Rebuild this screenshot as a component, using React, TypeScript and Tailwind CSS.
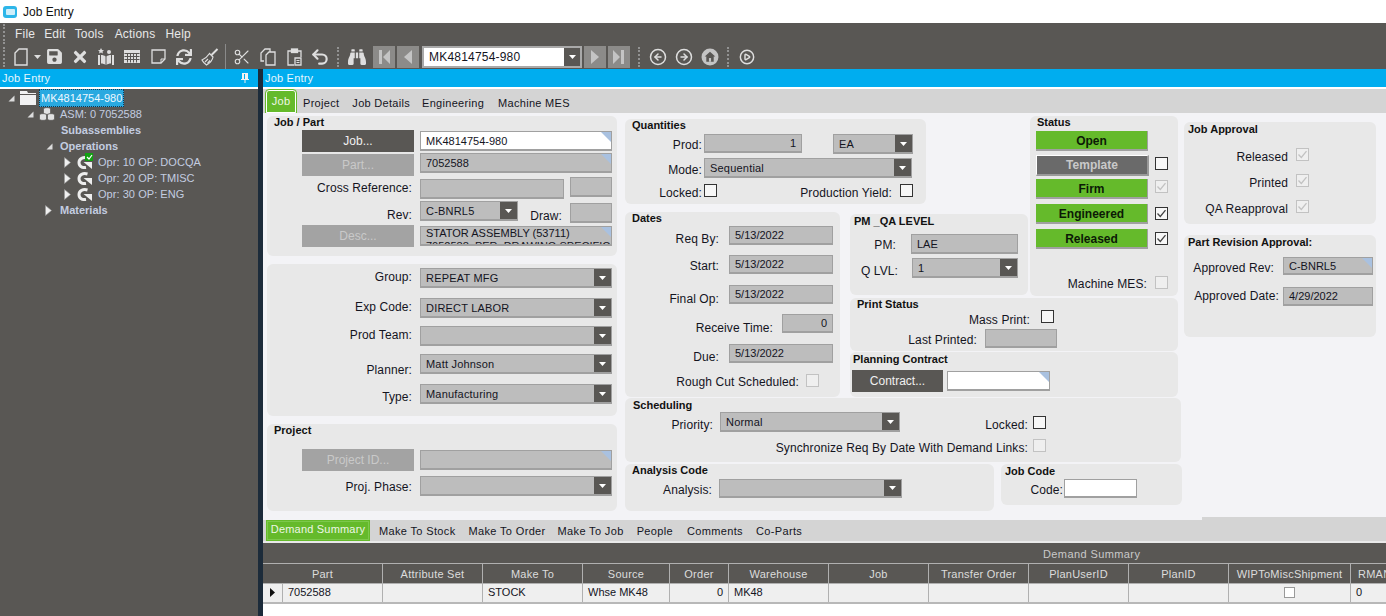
import React from "react";
import { FaSave, FaTimes, FaBinoculars, FaSync } from "react-icons/fa";
import { Scissors, Undo2, CircleArrowLeft, CircleArrowRight, CirclePlay } from "lucide-react";

const cx = (...c: (string | undefined)[]) => c.filter(Boolean).join(" ");

const Label = ({ className, children }: { className?: string; children: React.ReactNode }) => (
  <div className={cx("h-[17px] shrink-0 whitespace-nowrap pt-px text-right text-[12px] leading-[16px] tracking-[0.1px] text-[#14141e]", className)}>
    {children}
  </div>
);

const Corner = () => (
  <span className="absolute right-0 top-0 h-[10px] w-[10px] bg-[#a9c1e0] [clip-path:polygon(0_0,100%_0,100%_100%)]" />
);

type FieldProps = { className?: string; text?: string; corner?: boolean; white?: boolean; right?: boolean };

const Field = ({ className, text, corner, white, right }: FieldProps) => (
  <div
    className={cx(
      "relative flex shrink-0 items-center overflow-hidden whitespace-nowrap border border-b-2 border-[#a0a0a0] px-[5px] pt-px text-[11px] text-[#14141e]",
      white ? "bg-white" : "bg-[#bdbdbd]",
      right ? "justify-end" : "",
      className
    )}
  >
    {text}
    {corner && <Corner />}
  </div>
);

const Select = ({ className, text }: { className?: string; text?: string }) => (
  <div className={cx("flex shrink-0 items-stretch border border-b-2 border-[#a0a0a0] bg-[#bdbdbd] text-[11px] tracking-[0.2px] text-[#14141e]", className)}>
    <div className="flex flex-1 items-center overflow-hidden whitespace-nowrap pl-[5px] pt-px">{text}</div>
    <div className="flex w-[17px] items-center justify-center bg-[#595754]">
      <svg width="7" height="4" viewBox="0 0 7 4"><path d="M0 0h7L3.5 4z" fill="#fff" /></svg>
    </div>
  </div>
);

const Btn = ({ className, children, off }: { className?: string; children: React.ReactNode; off?: boolean }) => (
  <div
    className={cx(
      "flex h-[22px] shrink-0 items-center justify-center text-[12px]",
      off ? "bg-[#a3a3a3] text-[#c9c9c9]" : "bg-[#595754] text-[#f0f0f0]",
      className
    )}
  >
    {children}
  </div>
);

const Check = ({ className, on, off }: { className?: string; on?: boolean; off?: boolean }) => (
  <div
    className={cx(
      "flex h-[13px] w-[13px] shrink-0 items-center justify-center border",
      off ? "border-[#c2c2c2] bg-[#efefef]" : "border-[#333] bg-[#f7f7f7]",
      className
    )}
  >
    {on && (
      <svg width="11" height="11" viewBox="0 0 11 11" fill="none">
        <path d="M1.5 5.5 4.3 8.5 9.5 2.2" stroke={off ? "#c2c2c2" : "#444"} strokeWidth="1.3" />
      </svg>
    )}
  </div>
);

const Panel = ({ className, title, titleClass, children }: { className?: string; title?: string; titleClass?: string; children: React.ReactNode }) => (
  <div className={cx("shrink-0 overflow-hidden rounded-md bg-[#e8e8e8]", className)}>
    {title && <div className={cx("h-[12px] whitespace-nowrap text-[11px] font-bold leading-[12px] text-[#111]", titleClass)}>{title}</div>}
    {children}
  </div>
);

const StatusBtn = ({ className, children }: { className?: string; children: React.ReactNode }) => (
  <div className={cx("flex h-[20px] w-[112px] shrink-0 items-center justify-center border-b-2 border-r border-[#a0a0a0] bg-[#65ba2b] pt-px text-[12px] font-bold text-[#0c1a06]", className)}>
    {children}
  </div>
);

const Grip = ({ className }: { className?: string }) => (
  <div className={cx("h-[20px] w-[2px] shrink-0 border-l-2 border-dotted border-[#929292]", className)} />
);

const Tool = ({ className, children }: { className?: string; children: React.ReactNode }) => (
  <div className={cx("flex h-[25px] w-[26px] shrink-0 items-center justify-center text-[#dedede]", className)}>{children}</div>
);

const NavBtn = ({ className, d }: { className?: string; d: string }) => (
  <div className={cx("flex h-[22px] w-[22px] shrink-0 items-center justify-center bg-[#8c8b89]", className)}>
    <svg width="14" height="16" viewBox="0 0 14 16"><path d={d} fill="#c4c4c4" /></svg>
  </div>
);

const Toolbar = () => (
  <div className="flex h-[25px] shrink-0 items-center bg-[#595754]">
    <Grip className="ml-[3px]" />
    <Tool className="ml-[3px]">
      <svg width="14" height="18" viewBox="0 0 14 18" fill="none"><path d="M5 1h8v16H1V5z" stroke="#dedede" strokeWidth="1.4" /></svg>
    </Tool>
    <svg className="shrink-0" width="7" height="4" viewBox="0 0 7 4"><path d="M0 0h7L3.5 4z" fill="#dedede" /></svg>
    <Tool><FaSave size={17} /></Tool>
    <Tool><FaTimes size={18} /></Tool>
    <Tool>
      <svg width="18" height="18" viewBox="0 0 18 18" fill="#dedede">
        <path d="M4 0l1 2 2 .2-1.5 1.4.4 2L4 4.6 2.100 5.600l.4-2L1 2.200 3 2z" />
        <rect x="1" y="7" width="2" height="10" />
        <path d="M4 7c2 0 3.500.5 4.500 1.500V17C7.500 16 6 15.500 4 15.500z" />
        <path d="M14 7c-2 0-3.500.5-4.500 1.500V17c1-1 2.500-1.500 4.500-1.500z" />
        <rect x="15" y="7" width="2" height="10" />
        <circle cx="12" cy="4" r="2" />
      </svg>
    </Tool>
    <Tool>
      <svg width="16" height="13" viewBox="0 0 16 13" fill="none" stroke="#dedede">
        <rect x=".5" y=".5" width="15" height="12" fill="#dedede" />
        <path d="M3.500 3.500v9M6.500 3.500v9M9.500 3.500v9M12.500 3.500v9M.5 3.500h15M.5 6.500h15M.5 9.500h15" stroke="#595754" />
      </svg>
    </Tool>
    <Tool>
      <svg width="15" height="15" viewBox="0 0 15 15" fill="none"><path d="M1 1h13v9l-4 4H1z" stroke="#dedede" strokeWidth="1.3" /><path d="M14 10h-4v4" stroke="#dedede" /></svg>
    </Tool>
    <Tool><FaSync size={16} /></Tool>
    <Tool>
      <svg width="18" height="18" viewBox="0 0 18 18" fill="none" stroke="#dedede" strokeWidth="1.2">
        <path d="M16.500 1 10.500 7" strokeWidth="2" />
        <path d="M8.500 5.500 12 9c-.5 3-3 6-6.500 8C4 16 2 14 1 12c2.500-1 5.500-3.500 7.500-6.500z" />
        <path d="M4 14l3-3M6.500 15.500l2.500-3" />
      </svg>
    </Tool>
    <div className="ml-[2px] h-[25px] w-px shrink-0 bg-[#8a8a8a]" />
    <Tool className="ml-[3px]"><Scissors size={18} strokeWidth={1.5} /></Tool>
    <Tool>
      <svg width="16" height="18" viewBox="0 0 16 18" fill="none" stroke="#dedede" strokeWidth="1.3">
        <path d="M4 13H1V5l4-4h5v3" /><path d="M6 7l3-3h6v13H6z" />
      </svg>
    </Tool>
    <Tool>
      <svg width="15" height="18" viewBox="0 0 15 18" fill="none" stroke="#dedede" strokeWidth="1.3">
        <path d="M5 3H1v14h6" /><path d="M10 3h4v6" /><rect x="4.500" y="1" width="6" height="3.500" fill="#dedede" />
        <path d="M8 10h6v7H8z" fill="#595754" /><path d="M9.500 12.500h3M9.500 14.500h3" strokeWidth="1" />
      </svg>
    </Tool>
    <Tool><Undo2 size={20} strokeWidth={2.6} /></Tool>
    <Grip className="ml-[4px]" />
    <Tool className="ml-[5px]"><FaBinoculars size={18} /></Tool>
    <NavBtn className="ml-[3px]" d="M2 1h3v14H2zM13 1v14L6 8z" />
    <NavBtn className="ml-[2px]" d="M11 1v14L3 8z" />
    <div className="ml-[3px] flex h-[22px] w-[160px] shrink-0 items-stretch border-2 border-[#a9a9a9] bg-white text-[12px] tracking-[0.2px] text-[#14141e]">
      <div className="flex flex-1 items-center pl-[5px]">MK4814754-980</div>
      <div className="flex w-[16px] items-center justify-center bg-[#595754]">
        <svg width="7" height="4" viewBox="0 0 7 4"><path d="M0 0h7L3.500 4z" fill="#fff" /></svg>
      </div>
    </div>
    <NavBtn className="ml-[2px]" d="M3 1v14l8-7z" />
    <NavBtn className="ml-[2px]" d="M1 1v14l7-7zM9 1h3v14H9z" />
    <Grip className="ml-[8px]" />
    <Tool className="ml-[5px]"><CircleArrowLeft size={18} strokeWidth={2} /></Tool>
    <Tool><CircleArrowRight size={18} strokeWidth={2} /></Tool>
    <Tool>
      <svg width="18" height="18" viewBox="0 0 17 17">
        <circle cx="8.500" cy="8.500" r="8" fill="#c4c4c4" />
        <path d="M8.500 3.500 13.500 8H12v5H5V8H3.500z" fill="#595754" />
        <rect x="7.500" y="9.500" width="2" height="3.500" fill="#c4c4c4" />
      </svg>
    </Tool>
    <Grip className="ml-[4px]" />
    <Tool className="ml-[5px]"><CirclePlay size={16} strokeWidth={2.2} /></Tool>
  </div>
);

const TriOpen = ({ className }: { className?: string }) => (
  <svg className={cx("shrink-0", className)} width="7" height="7" viewBox="0 0 7 7"><path d="M6.500 .5v6H.5z" fill="#dcdcdc" /></svg>
);

const TriClosed = ({ className }: { className?: string }) => (
  <svg className={cx("shrink-0", className)} width="7" height="11" viewBox="0 0 7 11"><path d="M.5 .5 6.500 5.500.5 10.500z" fill="#f0f0f0" stroke="#999" strokeWidth=".6" /></svg>
);

const OpIcon = ({ done }: { done?: boolean }) => (
  <div className="relative ml-[6px] h-[13px] w-[15px] shrink-0">
    <svg width="15" height="13" viewBox="0 0 15 13" fill="none">
      <path d="M10.500 2C6 .8 2 2.500 2 6.500S5.500 12 9 11.500" stroke="#ededed" strokeWidth="3" />
      <path d="M6.500 6h8.500v7z" fill="#ededed" />
    </svg>
    {done && (
      <div className="absolute -right-[1px] -top-[3px] flex h-[8px] w-[8px] items-center justify-center bg-[#12a012]">
        <svg width="7" height="6" viewBox="0 0 7 6" fill="none"><path d="M1 3l2 2 3-4" stroke="#fff" strokeWidth="1.200" /></svg>
      </div>
    )}
  </div>
);

const TreeRow = ({ className, children }: { className?: string; children: React.ReactNode }) => (
  <div className={cx("flex h-[16px] items-center whitespace-nowrap text-[11px] text-[#c3cde0]", className)}>{children}</div>
);

const Tree = () => (
  <div className="flex-1 bg-[#595754] pt-px">
    <TreeRow className="pl-[8px]">
      <TriOpen />
      <svg className="ml-[5px] shrink-0" width="16" height="14" viewBox="0 0 16 14" fill="#f2f2f2"><path d="M0 0h7l1 2h8v1H0zM0 4h16v10H0z" /></svg>
      <span className="ml-[3px] border border-dotted border-[#0e3a55] bg-[#29a9e0] px-[1px] text-[#eef8ff]">MK4814754-980</span>
    </TreeRow>
    <TreeRow className="pl-[27px]">
      <TriOpen />
      <svg className="ml-[5px] shrink-0" width="16" height="14" viewBox="0 0 16 14">
        <g fill="#e2e2e2" stroke="#595754" strokeWidth=".7">
          <path d="M4.500 2c0-1.800 7-1.800 7 0v4c0 1.800-7 1.800-7 0z" />
          <path d="M.5 8c0-1.800 7-1.800 7 0v4c0 1.800-7 1.800-7 0z" />
          <path d="M8.500 8c0-1.800 7-1.800 7 0v4c0 1.800-7 1.800-7 0z" />
        </g>
      </svg>
      <span className="ml-[5px]">ASM: 0 7052588</span>
    </TreeRow>
    <TreeRow className="pl-[61px] font-bold">Subassemblies</TreeRow>
    <TreeRow className="pl-[46px] font-bold">
      <TriOpen />
      <span className="ml-[7px]">Operations</span>
    </TreeRow>
    <TreeRow className="pl-[64px]">
      <TriClosed />
      <OpIcon done />
      <span className="ml-[6px] tracking-[0.05px]">Opr: 10 OP: DOCQA</span>
    </TreeRow>
    <TreeRow className="pl-[64px]">
      <TriClosed />
      <OpIcon />
      <span className="ml-[6px] tracking-[0.05px]">Opr: 20 OP: TMISC</span>
    </TreeRow>
    <TreeRow className="pl-[64px]">
      <TriClosed />
      <OpIcon />
      <span className="ml-[6px] tracking-[0.05px]">Opr: 30 OP: ENG</span>
    </TreeRow>
    <TreeRow className="pl-[45px] font-bold">
      <TriClosed />
      <span className="ml-[8px]">Materials</span>
    </TreeRow>
  </div>
);

const JobPanels = () => (
  <div className="flex w-[350px] shrink-0 flex-col">
    <Panel className="h-[140px]" title="Job / Part" titleClass="pl-[7px]">
      <div className="mt-[2px] flex h-[23px]">
        <Btn className="ml-[35px] w-[112px]">Job...</Btn>
        <Field className="ml-[6px] mt-[1px] h-[20px] w-[192px]" text="MK4814754-980" white corner />
      </div>
      <div className="flex h-[24px]">
        <Btn off className="ml-[35px] mt-[1px] w-[112px]">Part...</Btn>
        <Field className="ml-[6px] h-[20px] w-[192px]" text="7052588" corner />
      </div>
      <div className="flex h-[24px]">
        <Label className="mt-[2px] w-[145px]">Cross Reference:</Label>
        <Field className="ml-[8px] mt-[2px] h-[20px] w-[144px]" />
        <Field className="ml-[6px] h-[20px] w-[42px]" />
      </div>
      <div className="flex h-[24px]">
        <Label className="mt-[5px] w-[145px]">Rev:</Label>
        <Select className="ml-[8px] h-[20px] w-[98px]" text="C-BNRL5" />
        <Label className="ml-[12px] mt-[6px] w-[32px]">Draw:</Label>
        <Field className="ml-[8px] mt-[2px] h-[20px] w-[42px]" />
      </div>
      <div className="flex">
        <Btn off className="ml-[35px] w-[112px]">Desc...</Btn>
        <div className="relative ml-[6px] mt-[1px] h-[20px] w-[192px] overflow-hidden border border-b-2 border-[#a0a0a0] bg-[#bdbdbd] px-[5px] text-[11px] leading-[13px] text-[#14141e]">
          <div className="whitespace-nowrap">STATOR ASSEMBLY (53711)</div>
          <div className="whitespace-nowrap">7052588, PER, DRAWING SPECIFIC</div>
          <Corner />
        </div>
      </div>
    </Panel>

    <Panel className="mt-[8px] h-[152px] pt-[4px]">
      <div className="flex h-[30px]">
        <Label className="w-[145px]">Group:</Label>
        <Select className="ml-[8px] h-[20px] w-[192px]" text="REPEAT MFG" />
      </div>
      <div className="flex h-[28px]">
        <Label className="w-[145px]">Exp Code:</Label>
        <Select className="ml-[8px] h-[20px] w-[192px]" text="DIRECT LABOR" />
      </div>
      <div className="flex h-[28px]">
        <Label className="w-[145px]">Prod Team:</Label>
        <Select className="ml-[8px] h-[20px] w-[192px]" />
      </div>
      <div className="flex h-[30px]">
        <Label className="mt-[7px] w-[145px]">Planner:</Label>
        <Select className="ml-[8px] h-[20px] w-[192px]" text="Matt Johnson" />
      </div>
      <div className="flex">
        <Label className="mt-[4px] w-[145px]">Type:</Label>
        <Select className="ml-[8px] h-[20px] w-[192px]" text="Manufacturing" />
      </div>
    </Panel>

    <Panel className="mt-[8px] h-[87px]" title="Project" titleClass="pl-[7px]">
      <div className="mt-[13px] flex h-[27px]">
        <Btn off className="ml-[35px] w-[112px]">Project ID...</Btn>
        <Field className="ml-[6px] mt-[1px] h-[20px] w-[192px]" corner />
      </div>
      <div className="flex">
        <Label className="mt-[2px] w-[145px]">Proj. Phase:</Label>
        <Select className="ml-[8px] h-[20px] w-[192px]" />
      </div>
    </Panel>
  </div>
);

const MiddlePanels = () => (
  <div className="ml-[8px] flex w-[557px] shrink-0 flex-col">
    <div className="grid grid-cols-[215px_10px_178px_2px_148px] grid-rows-[96px_86px_54px_45px]">
      <Panel className="col-start-1 col-end-4 row-start-1 mt-[3px] h-[85px] w-[301px]" title="Quantities" titleClass="pl-[7px]">
        <div className="mt-[3px] flex h-[24px]">
          <Label className="mt-[2px] w-[77px]">Prod:</Label>
          <Field className="ml-[2px] h-[19px] w-[98px]" text="1" right />
          <Select className="ml-[31px] h-[20px] w-[80px]" text="EA" />
        </div>
        <div className="flex h-[24px]">
          <Label className="mt-[3px] w-[77px]">Mode:</Label>
          <Select className="ml-[2px] h-[20px] w-[208px]" text="Sequential" />
        </div>
        <div className="flex">
          <Label className="mt-[2px] w-[77px]">Locked:</Label>
          <Check className="ml-[2px] mt-[2px]" />
          <Label className="ml-[83px] mt-[2px] w-[92px]">Production Yield:</Label>
          <Check className="ml-[8px] mt-[2px]" />
        </div>
      </Panel>

      <Panel className="col-start-1 row-start-2 row-end-5 h-[185px]" title="Dates" titleClass="pl-[7px]">
        <div className="mt-[2px] flex h-[29px]">
          <Label className="mt-[4px] w-[94px]">Req By:</Label>
          <Field className="ml-[10px] h-[19px] w-[104px]" text="5/13/2022" />
        </div>
        <div className="flex h-[30px]">
          <Label className="mt-[2px] w-[94px]">Start:</Label>
          <Field className="ml-[10px] h-[19px] w-[104px]" text="5/13/2022" />
        </div>
        <div className="flex h-[29px]">
          <Label className="mt-[5px] w-[94px]">Final Op:</Label>
          <Field className="ml-[10px] h-[19px] w-[104px]" text="5/13/2022" />
        </div>
        <div className="flex h-[30px]">
          <Label className="mt-[5px] w-[148px]">Receive Time:</Label>
          <Field className="ml-[9px] h-[19px] w-[51px]" text="0" right />
        </div>
        <div className="flex h-[30px]">
          <Label className="mt-[4px] w-[94px]">Due:</Label>
          <Field className="ml-[10px] h-[19px] w-[104px]" text="5/13/2022" />
        </div>
        <div className="flex">
          <Label className="-mt-[1px] w-[174px]">Rough Cut Scheduled:</Label>
          <Check off className="ml-[7px]" />
        </div>
      </Panel>

      <Panel className="col-start-3 row-start-2 mt-[2px] h-[81px]" title="PM _QA LEVEL" titleClass="mt-[1px] pl-[4px]">
        <div className="mt-[7px] flex h-[24px]">
          <Label className="mt-[2px] w-[46px]">PM:</Label>
          <Field className="ml-[15px] h-[20px] w-[107px]" text="LAE" />
        </div>
        <div className="flex">
          <Label className="mt-[4px] w-[48px]">Q LVL:</Label>
          <Select className="ml-[14px] h-[20px] w-[106px]" text="1" />
        </div>
      </Panel>

      <Panel className="col-start-5 row-start-1 row-end-3 h-[180px]" title="Status" titleClass="pl-[7px]">
        <div className="mt-[3px] flex h-[24px]">
          <StatusBtn className="ml-[6px]">Open</StatusBtn>
        </div>
        <div className="flex h-[24px]">
          <div className="ml-[6px] flex h-[21px] w-[113px] items-center justify-center border-l border-t border-white border-b-2 border-r-2 border-b-[#999] border-r-[#999] bg-[#6a6a6a] text-[12px] font-bold text-[#c9c9c9]">
            Template
          </div>
          <Check className="ml-[6px] mt-[2px]" />
        </div>
        <div className="flex h-[25px]">
          <StatusBtn className="ml-[6px]">Firm</StatusBtn>
          <Check on off className="ml-[7px] mt-[1px]" />
        </div>
        <div className="flex h-[25px]">
          <StatusBtn className="ml-[6px]">Engineered</StatusBtn>
          <Check on className="ml-[7px] mt-[3px]" />
        </div>
        <div className="flex h-[47px]">
          <StatusBtn className="ml-[6px]">Released</StatusBtn>
          <Check on className="ml-[7px] mt-[3px]" />
        </div>
        <div className="flex">
          <Label className="-mt-[1px] w-[117px]">Machine MES:</Label>
          <Check off className="ml-[8px]" />
        </div>
      </Panel>

      <Panel className="col-start-3 col-end-6 row-start-3 h-[53px]" title="Print Status" titleClass="pl-[7px]">
        <div className="flex h-[19px]">
          <Label className="mt-[1px] w-[180px]">Mass Print:</Label>
          <Check className="ml-[11px]" />
        </div>
        <div className="flex">
          <Label className="mt-[2px] w-[127px]">Last Printed:</Label>
          <Field className="ml-[8px] h-[19px] w-[72px]" />
        </div>
      </Panel>

      <Panel className="col-start-3 col-end-6 row-start-4 h-[45px]" title="Planning Contract" titleClass="mt-[1px] pl-[3px]">
        <div className="mt-[5px] flex">
          <Btn className="ml-[2px] w-[91px]">Contract...</Btn>
          <Field className="ml-[4px] mt-[1px] h-[20px] w-[103px]" white corner />
        </div>
      </Panel>
    </div>

    <Panel className="mt-px h-[64px] w-[556px]" title="Scheduling" titleClass="mt-[1px] pl-[8px]">
      <div className="mt-px flex h-[27px]">
        <Label className="mt-[4px] w-[88px]">Priority:</Label>
        <Select className="ml-[7px] h-[20px] w-[180px]" text="Normal" />
        <Label className="mt-[4px] w-[128px]">Locked:</Label>
        <Check className="ml-[5px] mt-[4px]" />
      </div>
      <div className="flex">
        <Label className="w-[403px]">Synchronize Req By Date With Demand Links:</Label>
        <Check off className="ml-[5px]" />
      </div>
    </Panel>

    <div className="mt-[2px] flex items-start">
      <Panel className="h-[47px] w-[369px]" title="Analysis Code" titleClass="pl-[7px]">
        <div className="mt-[3px] flex">
          <Label className="mt-[2px] w-[87px]">Analysis:</Label>
          <Select className="ml-[7px] h-[19px] w-[183px]" />
        </div>
      </Panel>
      <Panel className="ml-[7px] h-[41px] w-[181px]" title="Job Code" titleClass="mt-[1px] pl-[4px]">
        <div className="mt-[2px] flex">
          <Label className="mt-[2px] w-[62px]">Code:</Label>
          <Field className="ml-[1px] h-[19px] w-[73px]" white />
        </div>
      </Panel>
    </div>
  </div>
);

const ApprovalPanels = () => (
  <div className="ml-[2px] flex w-[192px] shrink-0 flex-col pt-[6px]">
    <Panel className="h-[102px]" title="Job Approval" titleClass="mt-[1px] pl-[4px]">
      {["Released", "Printed", "QA Reapproval"].map((t, i) => (
        <div key={t} className={cx("flex h-[26px]", i === 0 ? "mt-[13px]" : "")}>
          <Label className="w-[104px]">{t}</Label>
          <Check on off className="ml-[8px]" />
        </div>
      ))}
    </Panel>
    <Panel className="mt-[11px] h-[102px]" title="Part Revision Approval:" titleClass="mt-[1px] pl-[4px]">
      <div className="mt-[9px] flex h-[30px]">
        <Label className="ml-[9px] mt-[2px] w-[81px]">Approved Rev:</Label>
        <Field className="ml-[9px] h-[18px] w-[90px]" text="C-BNRL5" corner />
      </div>
      <div className="flex">
        <Label className="ml-[10px] w-[85px]">Approved Date:</Label>
        <Field className="ml-[4px] h-[19px] w-[90px]" text="4/29/2022" />
      </div>
    </Panel>
  </div>
);

const columns = [
  { w: "w-[120px]", t: "Part" },
  { w: "w-[100px]", t: "Attribute Set" },
  { w: "w-[100px]", t: "Make To" },
  { w: "w-[87px]", t: "Source" },
  { w: "w-[59px]", t: "Order" },
  { w: "w-[100px]", t: "Warehouse" },
  { w: "w-[100px]", t: "Job" },
  { w: "w-[100px]", t: "Transfer Order" },
  { w: "w-[100px]", t: "PlanUserID" },
  { w: "w-[100px]", t: "PlanID" },
  { w: "w-[122px]", t: "WIPToMiscShipment" },
];

const cell = "flex h-full shrink-0 items-center border-r border-[#b0b0b0] px-[5px] pb-px text-[11px] text-[#14141e]";

const DemandGrid = () => (
  <div className="flex flex-1 flex-col overflow-hidden bg-white">
    <div className="flex h-[21px] shrink-0 items-center gap-[8px] bg-[#d4d4d4] pl-[3px] pt-[2px] text-[11px] tracking-[0.35px] text-[#14141e]">
      <div className="-mt-[2px] flex h-[21px] w-[104px] items-center justify-center border-x border-[#65ba2b] bg-[#65ba2b] pb-[2px] tracking-[0.2px] text-[#eef6e6] outline outline-1 -outline-offset-2 outline-[#7cc94a]">
        Demand Summary
      </div>
      <div className="ml-px">Make To Stock</div>
      <div className="ml-[5px]">Make To Order</div>
      <div className="ml-[4px]">Make To Job</div>
      <div className="ml-[5px]">People</div>
      <div className="ml-[6px]">Comments</div>
      <div className="ml-[5px]">Co-Parts</div>
    </div>
    <div className="h-[2px] shrink-0 bg-[#e9e9e9]" />
    <div className="flex h-[20px] shrink-0 items-center bg-[#595754] pl-[780px] pt-[2px] text-[11px] tracking-[0.4px] text-[#c9c9c9]">
      Demand Summary
    </div>
    <div className="flex h-[21px] shrink-0 items-center border-y border-[#b0b0b0] bg-[#595754] text-[11px] tracking-[0.25px] text-[#dcdcdc]">
      {columns.map((c) => (
        <div key={c.t} className={cx("flex h-full shrink-0 items-center justify-center border-r border-[#b0b0b0] pt-[2px]", c.w)}>{c.t}</div>
      ))}
      <div className="whitespace-nowrap pl-[7px] pt-[2px]">RMAN</div>
    </div>
    <div className="flex h-[20px] shrink-0 items-center border-b-2 border-[#b8b8b8] bg-[#efefef]">
      <div className={cx(cell, "w-[20px] justify-center px-0")}>
        <svg width="5" height="9" viewBox="0 0 5 9"><path d="M0 0l5 4.500L0 9z" fill="#111" /></svg>
      </div>
      <div className={cx(cell, "w-[100px]")}>7052588</div>
      <div className={cx(cell, "w-[100px]")} />
      <div className={cx(cell, "w-[100px]")}>STOCK</div>
      <div className={cx(cell, "w-[87px]")}>Whse MK48</div>
      <div className={cx(cell, "w-[59px] justify-end")}>0</div>
      <div className={cx(cell, "w-[100px]")}>MK48</div>
      <div className={cx(cell, "w-[100px]")} />
      <div className={cx(cell, "w-[100px]")} />
      <div className={cx(cell, "w-[100px]")} />
      <div className={cx(cell, "w-[100px]")} />
      <div className={cx(cell, "w-[122px] justify-center")}>
        <div className="h-[11px] w-[11px] border border-[#9a9a9a] bg-white" />
      </div>
      <div className="pb-px pl-[5px] text-[11px] text-[#14141e]">0</div>
    </div>
  </div>
);

export default function App() {
  return (
    <div className="flex h-[616px] w-[1386px] flex-col overflow-hidden bg-white font-['Liberation_Sans',sans-serif]">
      <div className="flex h-[23px] shrink-0 items-center bg-white pl-[3px] text-[12px] text-[#111]">
        <div className="flex h-[12px] w-[14px] items-center justify-center rounded-[3px] bg-[#2db6e9]">
          <div className="h-[6px] w-[9px] rounded-[1px] bg-[#cfeefa]" />
        </div>
        <span className="ml-[6px]">Job Entry</span>
      </div>

      <div className="flex h-[21px] shrink-0 items-center bg-[#595754] text-[12px] tracking-[0.2px] text-[#e8e8e8]">
        <Grip className="ml-[3px] h-[15px]" />
        <span className="ml-[10px]">File</span>
        <span className="ml-[9px]">Edit</span>
        <span className="ml-[9px]">Tools</span>
        <span className="ml-[11px]">Actions</span>
        <span className="ml-[10px]">Help</span>
      </div>

      <Toolbar />

      <div className="flex min-h-0 flex-1">
        <div className="flex w-[258px] shrink-0 flex-col">
          <div className="flex h-[18px] shrink-0 items-center justify-between bg-[#00adef] px-[2px] text-[11px] tracking-[0.2px] text-[#e6f6fd]">
            Job Entry
            <svg className="mr-[7px]" width="8" height="10" viewBox="0 0 8 10" fill="#f2f2f2"><path d="M1 0h6v6h1v1H4.500v3h-1V7H0V6h1zM3 1v5h1V1z" /></svg>
          </div>
          <div className="h-[2px] shrink-0 bg-white" />
          <Tree />
        </div>

        <div className="w-[5px] shrink-0 bg-[#1c2b3a]" />

        <div className="flex min-w-0 flex-1 flex-col">
          <div className="flex h-[18px] shrink-0 items-center bg-[#00adef] pl-[2px] text-[11px] tracking-[0.2px] text-[#e6f6fd]">Job Entry</div>
          <div className="h-[2px] shrink-0 bg-white" />
          <div className="flex h-[24px] shrink-0 items-end bg-[#d4d4d4] text-[11px] tracking-[0.3px] text-[#14141e]">
            <div className="ml-[3px] flex h-[23px] w-[30px] items-center justify-center rounded-t-[3px] border border-white bg-[#65ba2b] text-[#eef6e6] outline outline-1 outline-[#65ba2b]">
              Job
            </div>
            <div className="flex h-[24px] items-center pl-[7px] pt-[4px]">Project</div>
            <div className="flex h-[24px] items-center pl-[13px] pt-[4px]">Job Details</div>
            <div className="flex h-[24px] items-center pl-[12px] pt-[4px]">Engineering</div>
            <div className="flex h-[24px] items-center pl-[14px] pt-[4px]">Machine MES</div>
          </div>

          <div className="flex h-[407px] shrink-0 flex-col bg-[#f3f3f6]">
            <div className="flex h-[404px] shrink-0 pl-[4px] pt-[3px]">
              <JobPanels />
              <MiddlePanels />
              <ApprovalPanels />
            </div>
            <div className="flex h-[3px] shrink-0 justify-end">
              <div className="w-[184px] bg-[#d4d4d4]" />
            </div>
          </div>

          <DemandGrid />
        </div>
      </div>
    </div>
  );
}
